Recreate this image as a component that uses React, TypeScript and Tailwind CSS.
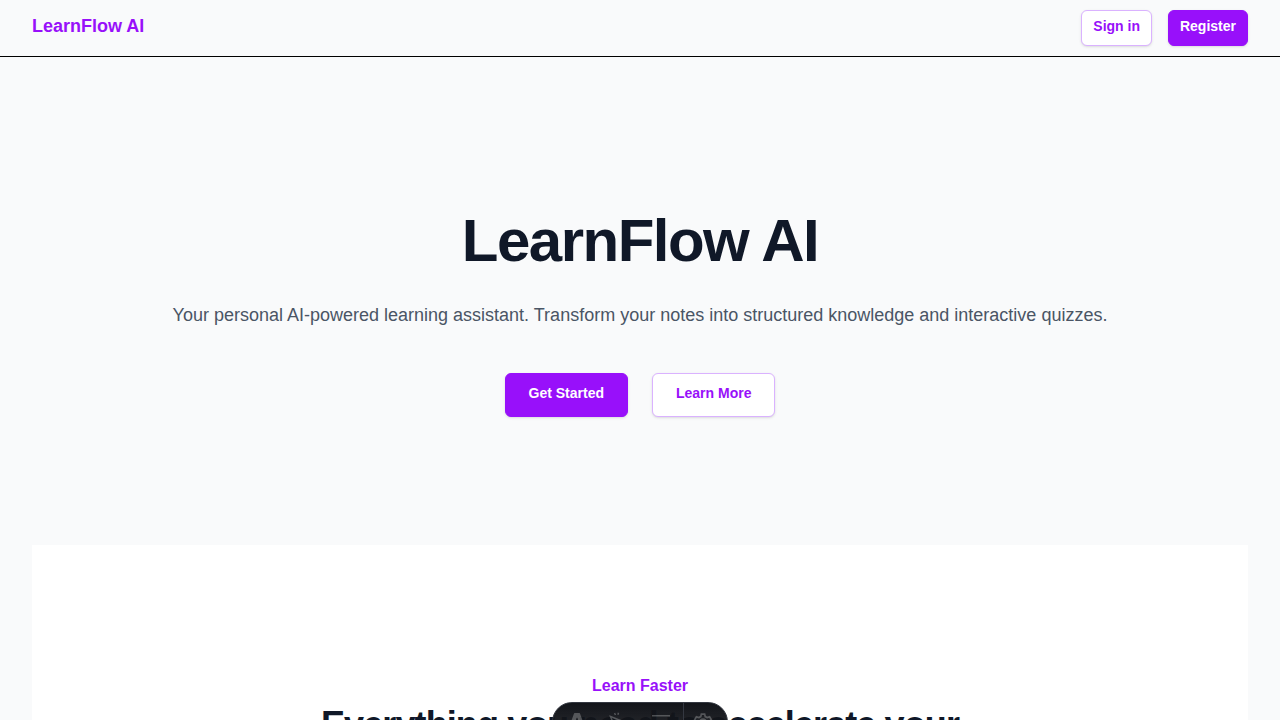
import type { ReactNode } from "react";

type LinkButtonProps = {
  href: string;
  variant: "solid" | "outline";
  size?: "md" | "lg";
  children: ReactNode;
};

const variants = {
  solid: "bg-[#9810fa] text-white border-[#9810fa]",
  outline: "bg-white text-[#9810fa] border-[#dab2ff]",
};

const sizes = {
  md: "px-[11px] pt-[5px] pb-[9px]",
  lg: "px-[23px] pt-[9px] pb-[13px]",
};

function LinkButton({ href, variant, size = "md", children }: LinkButtonProps) {
  return (
    <a
      href={href}
      className={`rounded-md border text-sm font-semibold shadow-sm ${variants[variant]} ${sizes[size]}`}
    >
      {children}
    </a>
  );
}

function ToolButton({ label, children }: { label: string; children: ReactNode }) {
  return (
    <button type="button" aria-label={label} className="flex w-11 items-center justify-center text-white/25">
      {children}
    </button>
  );
}

function DevToolbar() {
  return (
    <div className="fixed inset-x-0 -bottom-[22px] flex justify-center">
      <div className="flex h-10 w-44 overflow-hidden rounded-full border border-[#343841] bg-linear-to-b from-[#13151a] to-[#13151a]/88">
        <ToolButton label="Menu">
          <svg viewBox="22 16 84 108" className="ml-1 h-[18px]" fill="currentColor">
            <path d="M50.4 78.5a75.1 75.1 0 0 0-28.5 6.9l24.2-65.7c.7-2 1.9-3.2 3.4-3.2h29c1.5 0 2.7 1.2 3.4 3.2l24.2 65.7s-11.6-7-28.5-7L67 45.5c-.4-1.7-1.6-2.8-2.9-2.8-1.3 0-2.5 1.1-2.9 2.7L50.4 78.5Zm-5.3 8c-2 6.6-.6 15.8 4.2 20.2a17.5 17.5 0 0 1 .2-.7 5.5 5.5 0 0 1 5.7-4.5c2.8.1 4.3 1.5 4.7 4.7.2 1.1.2 2.3.2 3.5v.4c0 2.7.7 5.2 2.2 7.4a13 13 0 0 0 5.7 4.9v-.3l-.2-.3c-1.8-5.6-.5-9.5 4.4-12.8l1.5-1a73 73 0 0 0 3.2-2.2 16 16 0 0 0 6.8-11.4c.3-2 .1-4-.6-6l-.8.6-1.6 1a37 37 0 0 1-22.4 2.7c-5-.7-9.7-2-13.2-6.2Z" />
          </svg>
        </ToolButton>
        <ToolButton label="Inspect">
          <svg viewBox="0 0 20 20" className="size-5" fill="none" stroke="currentColor" strokeWidth="1.5">
            <path d="M2.5 4.500 15 9.500l-5 2.200L8 17.500ZM6.500 1.200l1 1.800M10.500 .800l-.6 2M2 12l2-1" />
          </svg>
        </ToolButton>
        <ToolButton label="Audit">
          <svg viewBox="0 0 20 20" className="size-5" fill="none" stroke="currentColor" strokeWidth="1.5">
            <path d="M1 3.750h18M1 10h18M1 16.250h18" />
          </svg>
        </ToolButton>
        <div className="w-px shrink-0 bg-[#343841]" />
        <ToolButton label="Settings">
          <svg viewBox="0 0 24 24" className="mr-1 size-5" fill="none" stroke="currentColor" strokeWidth="2">
            <path d="M10 2.500h4l.7 3 2.200 1.200 3-.9 2 3.400-2.200 2.100v1.400l2.200 2.100-2 3.400-3-.9-2.200 1.200-.7 3h-4l-.7-3-2.200-1.200-3 .9-2-3.400 2.200-2.100v-1.400L2.100 9.200l2-3.400 3 .9 2.200-1.200Z" />
            <circle cx="12" cy="12" r="3.500" />
          </svg>
        </ToolButton>
      </div>
    </div>
  );
}

export default function App() {
  return (
    <div className="h-screen overflow-hidden bg-gray-50 font-['Liberation_Sans',Arial,sans-serif]">
      <header className="border-b border-black">
        <nav className="flex h-14 items-center justify-between px-8">
          <a href="#home" className="pb-1 text-lg font-semibold text-[#9810fa]">
            LearnFlow AI
          </a>
          <div className="flex gap-4">
            <LinkButton href="#signin" variant="outline">Sign in</LinkButton>
            <LinkButton href="#register" variant="solid">Register</LinkButton>
          </div>
        </nav>
      </header>

      <main className="px-8">
        <section className="py-32 text-center">
          <h1 className="pt-[26px] text-6xl font-bold tracking-tight text-gray-900">LearnFlow AI</h1>
          <p className="mt-7 text-lg leading-8 text-gray-600">
            Your personal AI-powered learning assistant. Transform your notes into structured knowledge and
            interactive quizzes.
          </p>
          <div className="mt-[42px] flex justify-center gap-6">
            <LinkButton href="#start" variant="solid" size="lg">Get Started</LinkButton>
            <LinkButton href="#features" variant="outline" size="lg">Learn More</LinkButton>
          </div>
        </section>

        <section id="features" className="bg-white py-32 text-center">
          <h2 className="text-base leading-[26px] font-semibold text-[#9810fa]">Learn Faster</h2>
          <p className="mt-1.5 text-4xl font-bold tracking-tight text-gray-900">
            Everything you need to accelerate your
          </p>
        </section>
      </main>

      <DevToolbar />
    </div>
  );
}
